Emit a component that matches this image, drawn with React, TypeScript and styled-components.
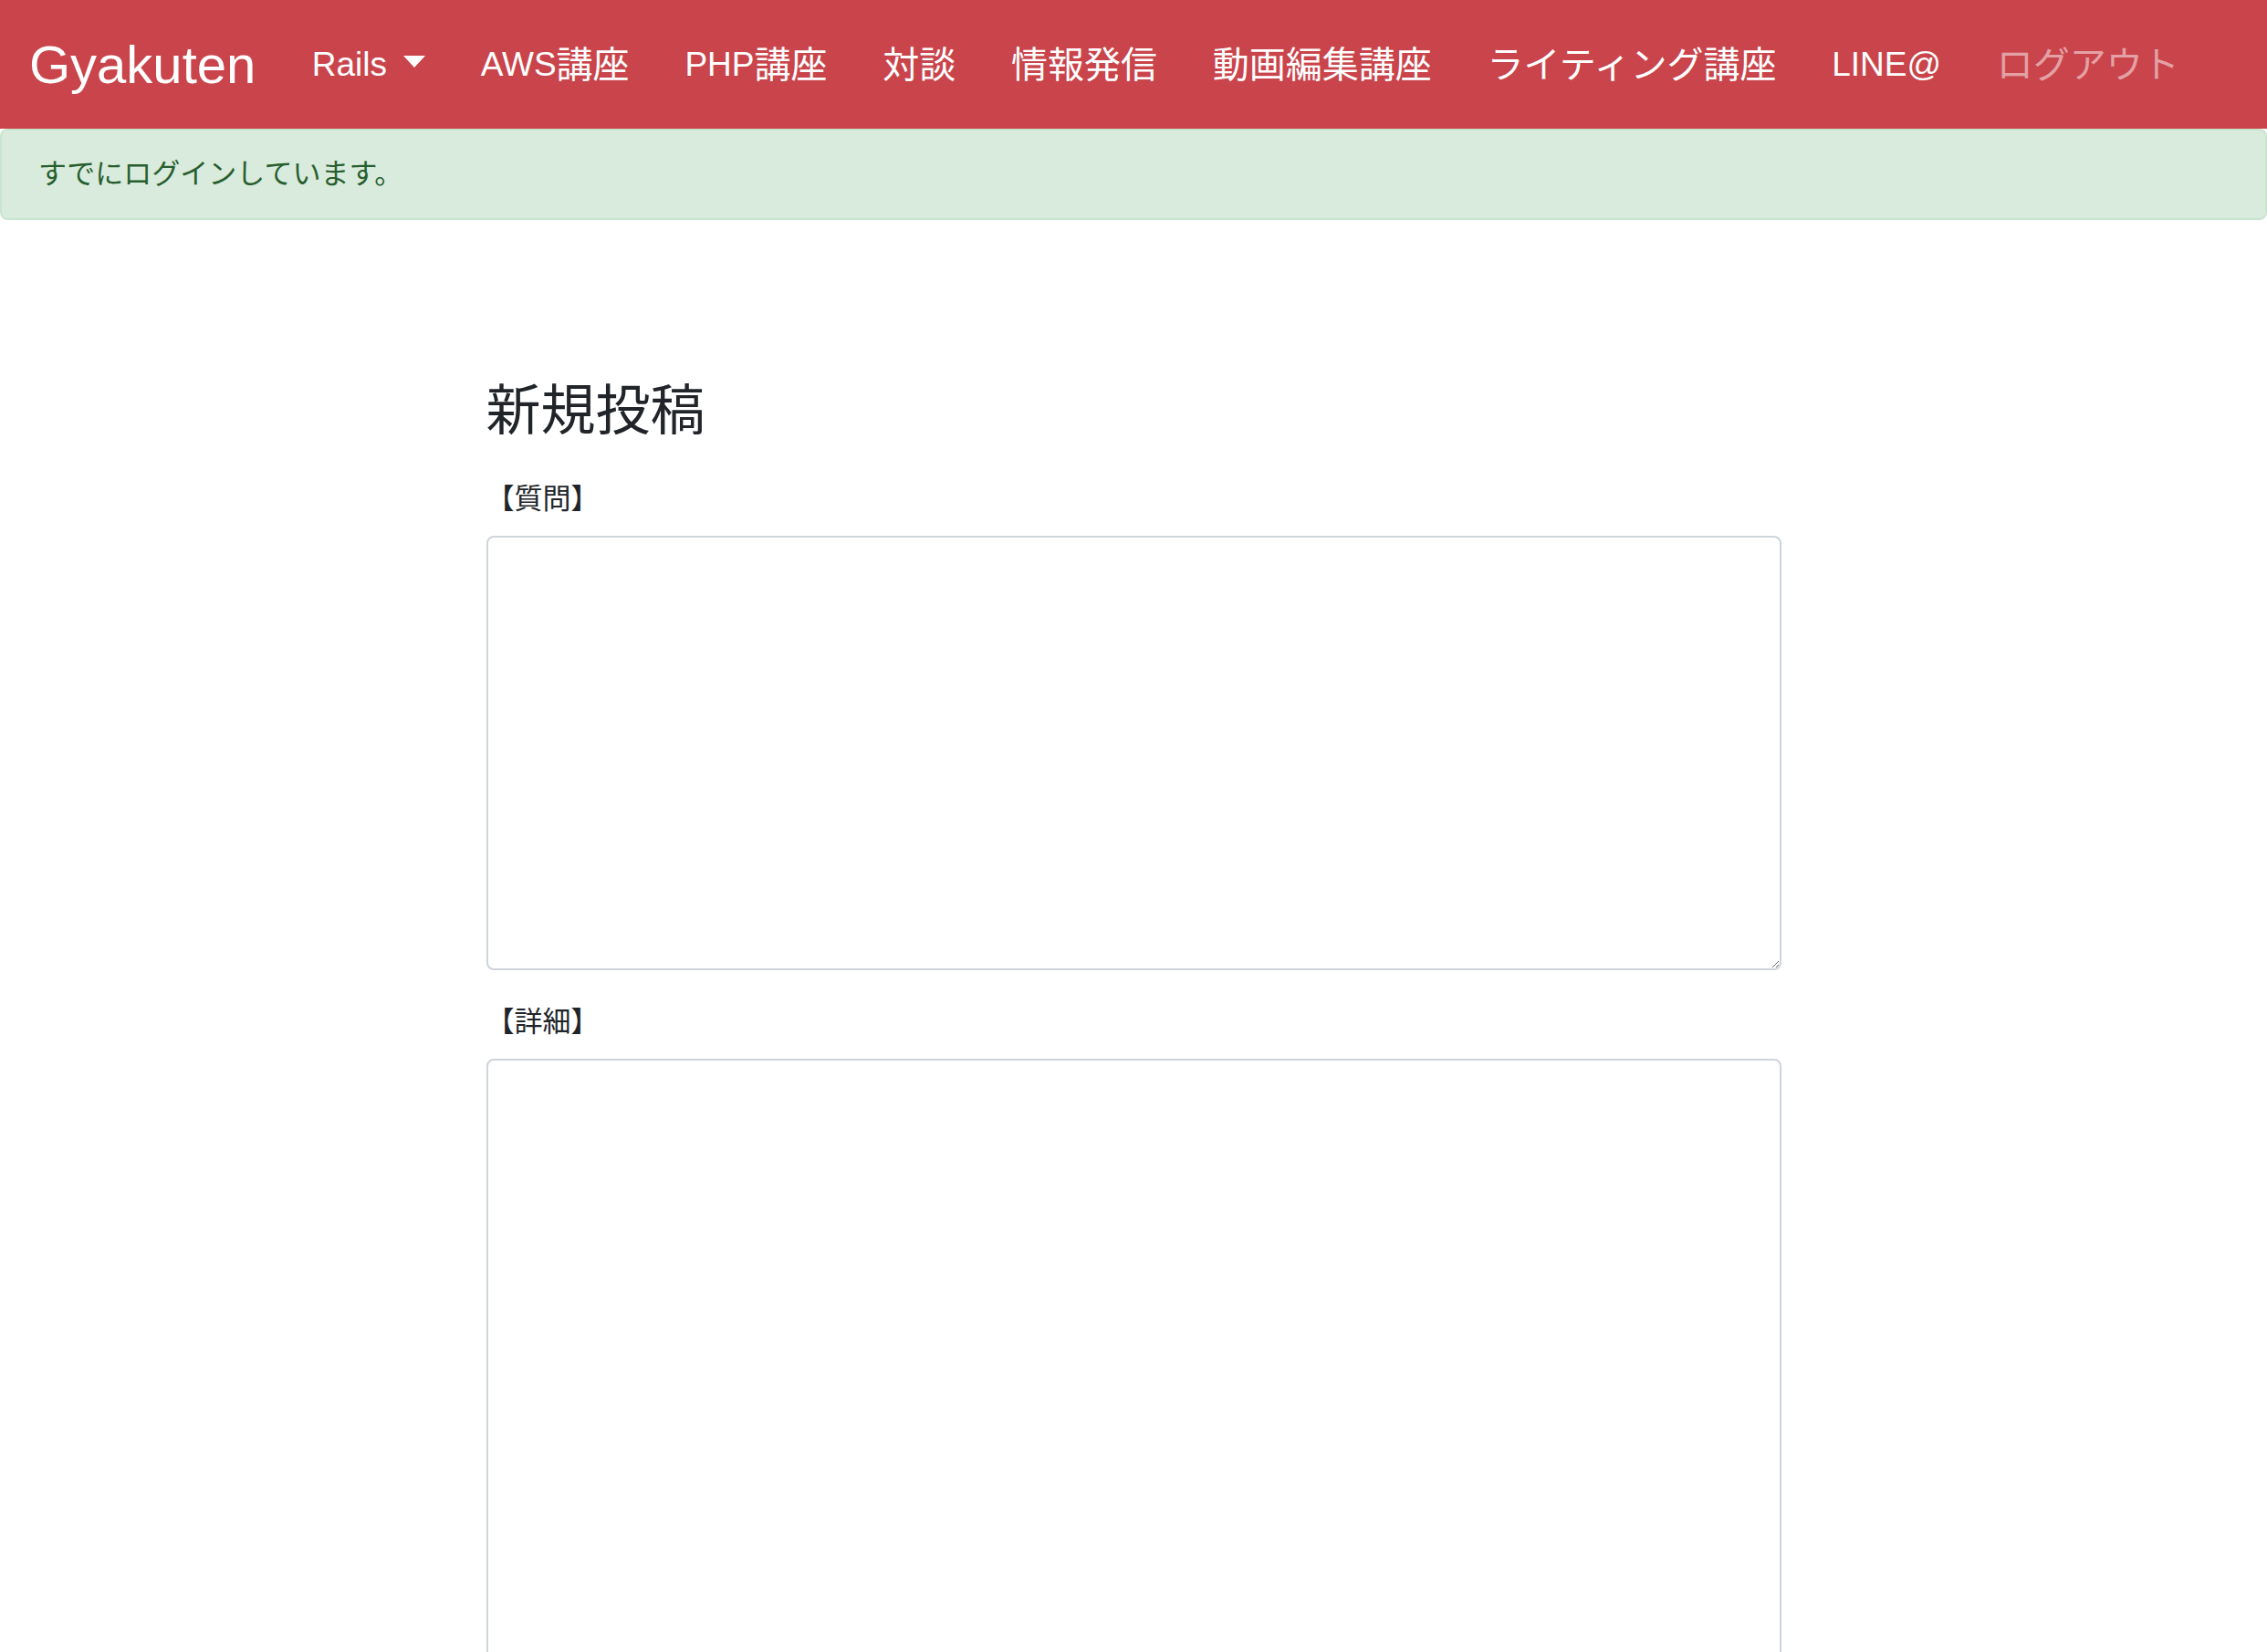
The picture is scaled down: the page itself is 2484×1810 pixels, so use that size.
import React from "react";
import styled, { createGlobalStyle } from "styled-components";

const Global = createGlobalStyle`
  html, body { margin: 0; padding: 0; background: #fff; }
  body {
    font-family: "Liberation Sans", "Noto Sans CJK JP", sans-serif;
    font-size: 31px;
    line-height: 1.5;
    color: #212529;
  }
  * { box-sizing: border-box; }
`;

const Navbar = styled.nav`
  height: 141px;
  background: #c9444b;
  display: flex;
  align-items: center;
  padding: 0 32px;
`;

const Brand = styled.a`
  font-size: 58px;
  line-height: 1.5;
  color: #fff;
  margin-right: 31px;
  text-decoration: none;
`;

const NavList = styled.ul`
  display: flex;
  align-items: center;
  list-style: none;
  margin: 0;
  padding: 0;
`;

const NavLink = styled.a<{ $muted?: boolean }>`
  display: flex;
  align-items: center;
  padding: 0 30.4px;
  font-size: 37px;
  line-height: 1.5;
  color: ${(p) => (p.$muted ? "rgba(255,255,255,0.5)" : "#fff")};
  text-decoration: none;
`;

const Jp = styled.span`
  font-size: 40px;
`;

const Caret = styled.span`
  width: 0;
  height: 0;
  border-top: 13px solid #fff;
  border-left: 12px solid transparent;
  border-right: 12px solid transparent;
  margin-left: 18px;
  margin-top: -6px;
`;

const Alert = styled.div`
  height: 100px;
  display: flex;
  align-items: center;
  padding: 0 40px;
  background: #d9ebdc;
  border: 2px solid #c9e5cf;
  border-radius: 8px;
  color: #275e2f;
  font-size: 31px;
`;

const Main = styled.main`
  width: 1419px;
  margin: 0 auto;
  padding-top: 174px;
`;

const Heading = styled.h2`
  font-size: 60px;
  line-height: 72px;
  font-weight: 400;
  margin: 0 0 37px;
  color: #212529;
`;

const Label = styled.label`
  display: block;
  font-size: 31px;
  line-height: 45px;
  margin-bottom: 18px;
  color: #212529;
`;

const TextArea = styled.textarea<{ $h: number }>`
  display: block;
  width: 100%;
  height: ${(p) => p.$h}px;
  border: 2px solid #ced4da;
  border-radius: 8px;
  margin: 0 0 34px;
  padding: 12px 24px;
  font: inherit;
  background: #fff;
`;

function Mixed({ text }: { text: string }) {
  const parts = text.match(/[\x00-\x7F]+|[^\x00-\x7F]+/g) || [];
  return (
    <>
      {parts.map((p, i) =>
        /^[\x00-\x7F]+$/.test(p) ? <span key={i}>{p}</span> : <Jp key={i}>{p}</Jp>
      )}
    </>
  );
}

const links = ["AWS講座", "PHP講座", "対談", "情報発信", "動画編集講座", "ライティング講座", "LINE@"];

export default function App() {
  return (
    <>
      <Global />
      <Navbar>
        <Brand href="#">Gyakuten</Brand>
        <NavList>
          <li>
            <NavLink href="#">
              Rails
              <Caret />
            </NavLink>
          </li>
          {links.map((l) => (
            <li key={l}>
              <NavLink href="#">
                <Mixed text={l} />
              </NavLink>
            </li>
          ))}
          <li>
            <NavLink href="#" $muted>
              <Mixed text="ログアウト" />
            </NavLink>
          </li>
        </NavList>
      </Navbar>
      <Alert>すでにログインしています。</Alert>
      <Main>
        <Heading>新規投稿</Heading>
        <Label>【質問】</Label>
        <TextArea $h={476} />
        <Label>【詳細】</Label>
        <TextArea $h={700} />
      </Main>
    </>
  );
}
